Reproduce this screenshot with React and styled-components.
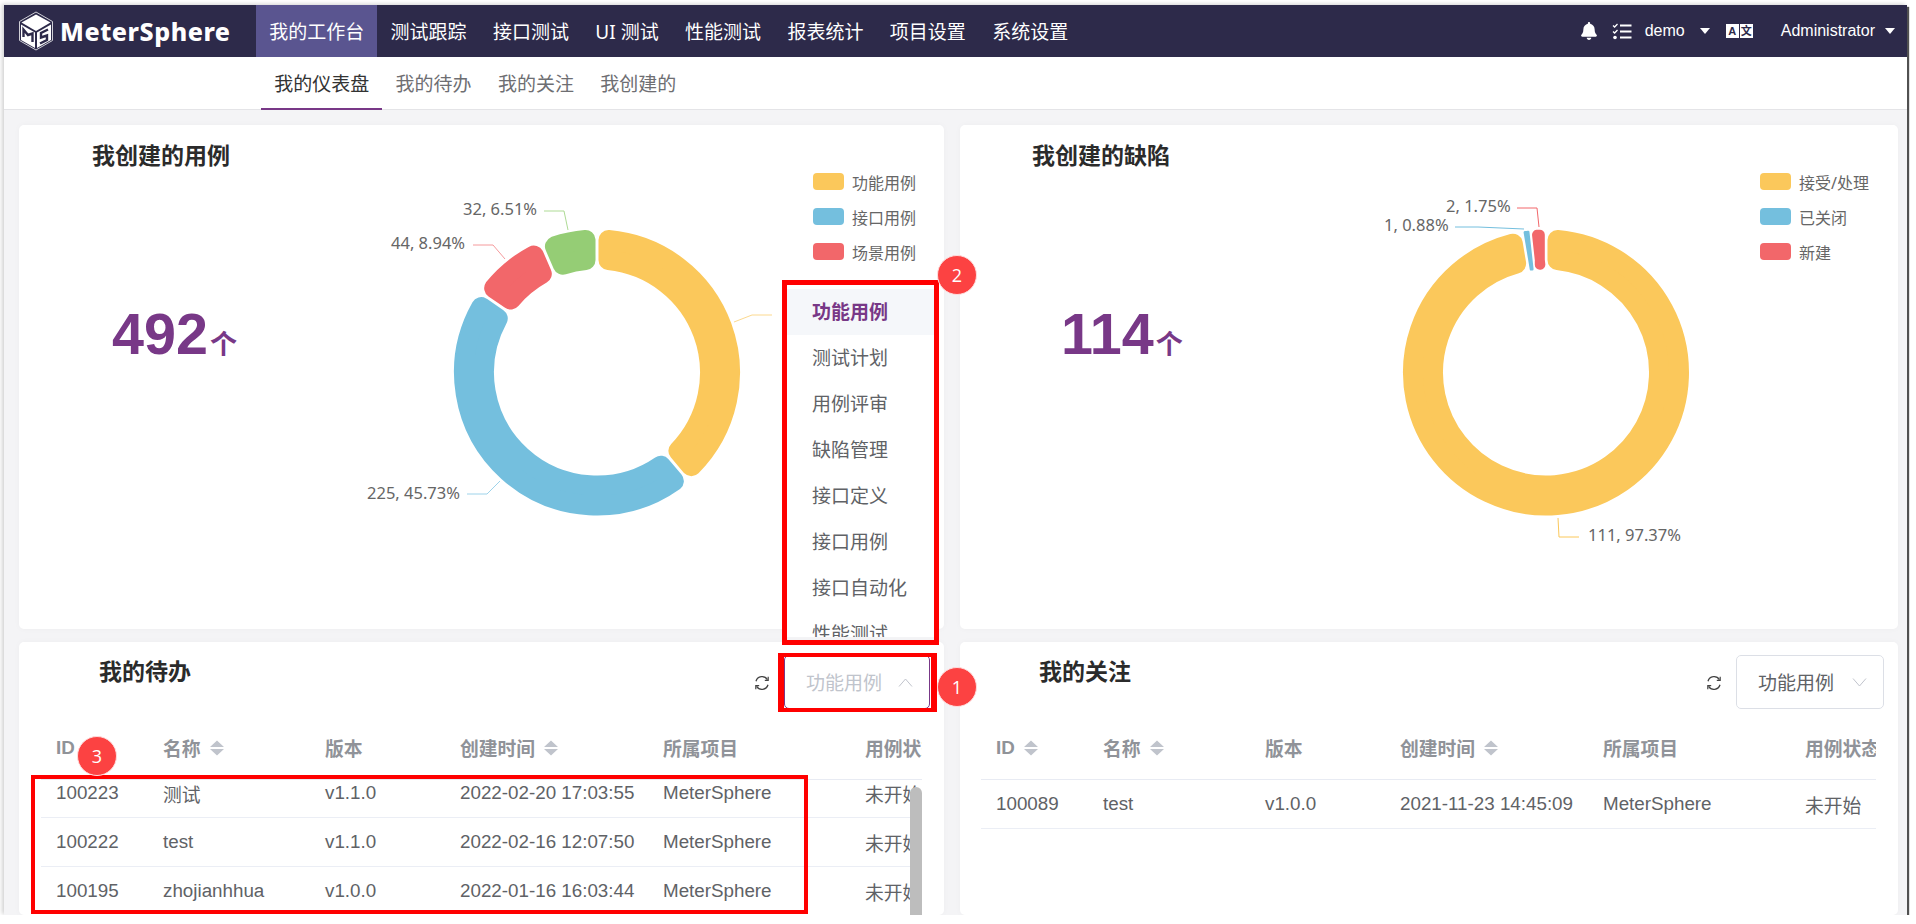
import React from "react";
import styled, { createGlobalStyle } from "styled-components";
import { FaBell } from "react-icons/fa";

const SANS = `"Liberation Sans", "Noto Sans CJK SC", sans-serif`;
const YAHEI = `"Noto Sans", "Noto Sans CJK SC", sans-serif`;

const Global = createGlobalStyle`
  html, body { margin: 0; padding: 0; background: #fff; overflow: hidden; }
  * { box-sizing: border-box; }
  body { font-family: ${SANS}; }
`;

const Frame = styled.div`
  position: relative;
  margin: 5px 0 0 4px;
  width: 1903px;
  height: 910px;
  background: #f4f4f6;
  box-shadow: 2px 2px 1px rgba(50, 50, 50, 0.85), -2px -1px 4px rgba(0, 0, 0, 0.18);
  display: flex;
  flex-direction: column;
`;

const Header = styled.header`
  height: 52px;
  background: #2d2a4a;
  display: flex;
  align-items: stretch;
  color: #fff;
  flex: none;
`;
const Logo = styled.div`
  width: 252px;
  display: flex;
  align-items: center;
  padding-left: 14px;
  gap: 6px;
`;
const LogoText = styled.span`
  font-family: "Noto Sans", sans-serif;
  font-weight: 800;
  font-size: 25px;
  letter-spacing: 0.55px;
  color: #fff;
  line-height: 1;
`;
const MenuItem = styled.div`
  padding: 0 13.2px;
  display: flex;
  align-items: center;
  font-size: 19px;
  font-family: ${YAHEI};
  color: #fff;
  white-space: nowrap;
  background: ${(p) => (p.$active ? "#5a5590" : "transparent")};
`;
const HeaderRight = styled.div`
  margin-left: auto;
  display: flex;
  align-items: center;
  padding-right: 12px;
  font-size: 16px;
`;
const HeaderText = styled.span`
  white-space: nowrap;
  margin: ${(p) => p.$m || 0};
`;
const Caret = styled.span`
  width: 0;
  height: 0;
  border-left: 5px solid transparent;
  border-right: 5px solid transparent;
  border-top: 6px solid #fff;
  margin: ${(p) => p.$m || 0};
`;
const LangIcon = styled.div`
  display: flex;
  gap: 1px;
  margin-left: 16px;
`;
const LangKey = styled.span`
  width: 13px;
  height: 14px;
  background: #fff;
  color: #2d2a4a;
  font-size: 11px;
  font-weight: 700;
  line-height: 14px;
  text-align: center;
  font-family: ${SANS};
`;

const SubNav = styled.nav`
  height: 53px;
  flex: none;
  background: #fff;
  border-bottom: 1px solid #e4e4e7;
  padding-left: 257px;
  display: flex;
`;
const Tab = styled.div`
  padding: 0 13.2px;
  height: 53px;
  display: flex;
  align-items: center;
  font-size: 19px;
  font-family: ${YAHEI};
  color: ${(p) => (p.$active ? "#333" : "#6e6e72")};
  border-bottom: 2px solid ${(p) => (p.$active ? "#783887" : "transparent")};
`;

const Main = styled.main`
  flex: 1;
  min-height: 0;
  padding: 15px 9px 0 15px;
  display: grid;
  grid-template-columns: 925px 938px;
  grid-template-rows: 504px 1fr;
  column-gap: 16px;
  row-gap: 13px;
`;
const Card = styled.section`
  background: #fff;
  border-radius: 5px;
  overflow: hidden;
  min-height: 0;
  box-shadow: 0 0 6px rgba(0, 0, 0, 0.03);
`;
const ChartCard = styled(Card)`
  display: flex;
  overflow: visible;
`;
const Summary = styled.div`
  flex: none;
  width: ${(p) => p.$w}px;
  padding-top: 15px;
  padding-left: ${(p) => p.$pad}px;
`;
const Title = styled.h2`
  margin: 0;
  font-size: 23px;
  line-height: 30px;
  font-weight: 700;
  font-family: ${YAHEI};
  color: #2b2b2b;
  white-space: nowrap;
`;
const Big = styled.div`
  margin: 131px 0 0 ${(p) => p.$shift}px;
  display: flex;
  align-items: baseline;
  color: #783887;
  font-weight: 700;
  white-space: nowrap;
`;
const BigNum = styled.span`
  font-size: 57.5px;
  line-height: 66px;
  font-family: ${SANS};
`;
const BigUnit = styled.span`
  font-size: 27px;
  font-family: ${YAHEI};
  margin-left: 2px;
`;
const ChartSvg = styled.svg`
  flex: none;
  width: ${(p) => p.$w}px;
  height: 400px;
  margin-top: 45px;
  overflow: visible;
`;
const ChartLabel = styled.text`
  font-family: ${YAHEI};
  font-size: 16.5px;
  fill: #666;
`;
const Legend = styled.ul`
  list-style: none;
  margin: 0 0 0 ${(p) => p.$gap || 0}px;
  padding: 48px 0 0 0;
  display: flex;
  flex-direction: column;
  gap: 18px;
`;
const LegendRow = styled.li`
  display: flex;
  align-items: center;
  gap: 8px;
  height: 17px;
  font-family: ${YAHEI};
  font-size: 16px;
  color: #666;
  white-space: nowrap;
`;
const Swatch = styled.span`
  width: 31px;
  height: 17px;
  border-radius: 4px;
  background: ${(p) => p.$c};
`;

const ListCard = styled(Card)`
  display: flex;
  flex-direction: column;
  position: relative;
`;
const ListHead = styled.div`
  height: 74px;
  flex: none;
  padding: 13px 14px 0 ${(p) => p.$pad}px;
  display: flex;
  align-items: flex-start;
`;
const ListTitle = styled(Title)`
  margin-top: 1px;
`;
const Refresh = styled.svg`
  margin: 20px 14px 0 auto;
  width: 16px;
  height: 16px;
  flex: none;
`;
const Select = styled.div`
  width: ${(p) => (p.$open ? 146 : 148)}px;
  height: 54px;
  border: 1px solid ${(p) => (p.$open ? "#783887" : "#dcdfe6")};
  border-radius: 5px;
  display: flex;
  align-items: center;
  padding: 0 16px 0 21px;
  justify-content: space-between;
  font-size: 19px;
  font-family: ${YAHEI};
  color: ${(p) => (p.$open ? "#c0c4cc" : "#606266")};
  flex: none;
`;
const TableWrap = styled.div`
  margin: 0 ${(p) => p.$right}px 0 ${(p) => p.$left}px;
  flex: 1;
  min-height: 0;
  display: flex;
  flex-direction: column;
  position: relative;
  overflow: hidden;
`;
const Row = styled.div`
  display: grid;
  grid-template-columns: 107px 162px 135px 203px 202px 1fr;
  flex: none;
  height: ${(p) => (p.$head ? 64 : 49)}px;
  border-bottom: 1px solid ${(p) => (p.$head ? "#e8ebf3" : "#ebeef5")};
  align-items: center;
  background: #fff;
`;
const Cell = styled.div`
  padding-left: 15px;
  font-size: 18.8px;
  color: #606266;
  font-family: ${SANS}, ${YAHEI};
  white-space: nowrap;
  overflow: hidden;
`;
const HeadCell = styled(Cell)`
  font-weight: 700;
  color: #909399;
  display: flex;
  align-items: center;
  gap: 9px;
`;
const Body = styled.div`
  flex: 1;
  min-height: 0;
  overflow: hidden;
`;
const BodyInner = styled.div`
  margin-top: ${(p) => p.$offset || 0}px;
`;
const Thumb = styled.div`
  position: absolute;
  right: 0;
  top: 71px;
  bottom: 0;
  width: 12px;
  background: #bdbdbd;
  border-radius: 6px 6px 0 0;
`;
const SortIcon = styled.svg`
  width: 14px;
  height: 16px;
  flex: none;
`;

const Dropdown = styled.div`
  position: absolute;
  left: 783px;
  top: 279px;
  width: 148px;
  height: 353px;
  background: #fff;
  overflow: hidden;
  padding-top: 5px;
  z-index: 3;
`;
const DropItem = styled.div`
  height: 46px;
  line-height: 46px;
  padding-left: 25px;
  font-size: 19px;
  font-family: ${YAHEI};
  color: ${(p) => (p.$active ? "#783887" : "#606266")};
  font-weight: ${(p) => (p.$active ? 700 : 400)};
  background: ${(p) => (p.$active ? "#f5f7fa" : "#fff")};
`;
const RedBox = styled.div`
  position: absolute;
  left: ${(p) => p.$x}px;
  top: ${(p) => p.$y}px;
  width: ${(p) => p.$w}px;
  height: ${(p) => p.$h}px;
  border-style: solid;
  border-color: #f00;
  border-width: ${(p) => p.$b || "5px"};
  z-index: 4;
  pointer-events: none;
`;
const Badge = styled.div`
  position: absolute;
  left: ${(p) => p.$x - 20}px;
  top: ${(p) => p.$y - 20}px;
  width: 40px;
  height: 40px;
  border-radius: 50%;
  background: #fc4242;
  border: 1px solid #fdd;
  color: #fff;
  font-size: 18px;
  font-family: "Open Sans", sans-serif;
  display: flex;
  align-items: center;
  justify-content: center;
  z-index: 5;
`;

/* ---------- drawings ---------- */

const pt = (cx, cy, r, deg) => {
  const a = ((deg - 90) * Math.PI) / 180;
  return `${(cx + r * Math.cos(a)).toFixed(2)} ${(cy + r * Math.sin(a)).toFixed(2)}`;
};
function sectorPath(cx, cy, ro, ri, a0, a1, c, gap) {
  const r1 = ro - c;
  const r2 = ri + c;
  const d1 = (((c + gap) / r1) * 180) / Math.PI;
  const d2 = (((c + gap) / r2) * 180) / Math.PI;
  const large1 = a1 - a0 - 2 * d1 > 180 ? 1 : 0;
  const large2 = a1 - a0 - 2 * d2 > 180 ? 1 : 0;
  return `M${pt(cx, cy, r1, a0 + d1)}A${r1} ${r1} 0 ${large1} 1 ${pt(cx, cy, r1, a1 - d1)}L${pt(cx, cy, r2, a1 - d2)}A${r2} ${r2} 0 ${large2} 0 ${pt(cx, cy, r2, a0 + d2)}Z`;
}
const Sector = ({ cx, cy, ro, ri, a0, a1, c, gap, color }) => (
  <path d={sectorPath(cx, cy, ro, ri, a0, a1, c, gap)} fill={color} stroke={color} strokeWidth={c * 2} strokeLinejoin="round" />
);
const YELLOW = "#fbc85b";
const BLUE = "#74bfde";
const RED = "#f2676a";
const GREEN = "#95cd75";

const LeftChart = () => (
  <ChartSvg $w={540} viewBox="259 170 540 400">
    <Sector cx={597} cy={372.5} ro={143} ri={103} a0={0} a1={139.75} c={10} gap={1.5} color={YELLOW} />
    <Sector cx={597} cy={372.5} ro={143} ri={103} a0={139.75} a1={304.4} c={10} gap={1.5} color={BLUE} />
    <Sector cx={597} cy={372.5} ro={143} ri={103} a0={304.4} a1={336.6} c={10} gap={1.5} color={RED} />
    <Sector cx={597} cy={372.5} ro={143} ri={103} a0={336.6} a1={360} c={10} gap={1.5} color={GREEN} />
    <g fill="none" strokeWidth="1">
      <polyline points="544,211 564,211 568,230" stroke="#aedb95" />
      <polyline points="473,245 493,245 505,259" stroke="#f59a9c" />
      <polyline points="467,494 487,494 500,481" stroke="#9ed3ea" />
      <polyline points="734,322 752,315 772,315" stroke="#fcd98f" />
    </g>
    <ChartLabel x="463" y="215">32, 6.51%</ChartLabel>
    <ChartLabel x="391" y="249">44, 8.94%</ChartLabel>
    <ChartLabel x="367" y="499">225, 45.73%</ChartLabel>
    <ChartLabel x="781" y="321">191, 38.82%</ChartLabel>
  </ChartSvg>
);
const RightChart = () => (
  <ChartSvg $w={550} viewBox="1210 170 550 400">
    <Sector cx={1546} cy={372.5} ro={143} ri={103} a0={0} a1={350.5} c={10} gap={1.5} color={YELLOW} />
    <Sector cx={1546} cy={372.5} ro={143} ri={103} a0={350.5} a1={353.7} c={1.4} gap={1} color={BLUE} />
    <Sector cx={1546} cy={372.5} ro={143} ri={103} a0={353.7} a1={360} c={5} gap={1.2} color={RED} />
    <g fill="none" strokeWidth="1">
      <polyline points="1517,208 1537,208 1539,227" stroke={RED} />
      <polyline points="1455,227 1478,227 1524,229" stroke={BLUE} />
      <polyline points="1558,518 1559,537 1579,537" stroke={YELLOW} />
    </g>
    <ChartLabel x="1446" y="212">2, 1.75%</ChartLabel>
    <ChartLabel x="1384" y="231">1, 0.88%</ChartLabel>
    <ChartLabel x="1588" y="541">111, 97.37%</ChartLabel>
  </ChartSvg>
);

const CubeLogo = () => (
  <svg width="36" height="40" viewBox="0 0 36 40">
    <path d="M18 1 L34.5 10.5 V29.5 L18 39 L1.5 29.5 V10.5 Z" fill="none" stroke="#cfcfd6" strokeWidth="1" />
    <path d="M18 3.5 L32.5 11.5 L18 20 L3.5 11.5 Z" fill="#fff" />
    <path d="M3 13.5 L17 21.5 V37 L3 29 Z" fill="#fff" />
    <path d="M33 13.5 L19 21.5 V37 L33 29 Z" fill="#fff" />
    <path d="M5.5 26 V18.5 L10 24 L14.5 22.5 V31" fill="none" stroke="#2d2a4a" strokeWidth="2.4" />
    <path d="M30 18.5 L23 22 V26.5 L29 24.5 V29 L22 32.5" fill="none" stroke="#2d2a4a" strokeWidth="2.4" />
  </svg>
);
const Checklist = () => (
  <svg width="20" height="17" viewBox="0 0 20 17" style={{ margin: "0 13px 0 14px" }}>
    <path d="M1 2.5 L2.6 4 L5.5 1 M1 8.5 L2.6 10 L5.5 7" fill="none" stroke="#fff" strokeWidth="1.3" />
    <circle cx="3" cy="14.5" r="1.8" fill="#fff" />
    <path d="M8 2.5 H19.5 M8 8.5 H19.5 M8 14.5 H19.5" stroke="#fff" strokeWidth="2" />
  </svg>
);
const RefreshIcon = () => (
  <Refresh viewBox="0 0 16 16">
    <path d="M2 6.2 A6.3 6.3 0 0 1 13.4 4.6 M14 9.8 A6.3 6.3 0 0 1 2.6 11.4" fill="none" stroke="#444" strokeWidth="1.3" />
    <path d="M14.2 1.8 V5.4 H10.8 M1.8 14.2 V10.6 H5.2" fill="none" stroke="#444" strokeWidth="1.2" />
  </Refresh>
);
const Sort = () => (
  <SortIcon viewBox="0 0 14 16">
    <path d="M7 0.5 L14 7 H0 Z M0 9 H14 L7 15.5 Z" fill="#c0c4cc" />
  </SortIcon>
);
const Chevron = ({ up, color }) => (
  <svg width="15" height="9" viewBox="0 0 15 9">
    <path d={up ? "M1 8.5 L7.5 1 L14 8.5" : "M1 0.5 L7.5 8 L14 0.5"} fill="none" stroke={color} strokeWidth="1" />
  </svg>
);

/* ---------- data ---------- */

const menu = ["我的工作台", "测试跟踪", "接口测试", "UI 测试", "性能测试", "报表统计", "项目设置", "系统设置"];
const tabs = ["我的仪表盘", "我的待办", "我的关注", "我创建的"];
const dropdown = ["功能用例", "测试计划", "用例评审", "缺陷管理", "接口定义", "接口用例", "接口自动化", "性能测试"];
const todoRows = [
  ["100223", "测试", "v1.1.0", "2022-02-20 17:03:55", "MeterSphere", "未开始"],
  ["100222", "test", "v1.1.0", "2022-02-16 12:07:50", "MeterSphere", "未开始"],
  ["100195", "zhojianhhua", "v1.0.0", "2022-01-16 16:03:44", "MeterSphere", "未开始"],
];
const watchRows = [["100089", "test", "v1.0.0", "2021-11-23 14:45:09", "MeterSphere", "未开始"]];

const DataTable = ({ rows, left, right, offset, scrollbar }) => (
  <TableWrap $left={left} $right={right}>
    <Row $head>
      <HeadCell>ID <Sort /></HeadCell>
      <HeadCell>名称 <Sort /></HeadCell>
      <HeadCell>版本</HeadCell>
      <HeadCell>创建时间 <Sort /></HeadCell>
      <HeadCell>所属项目</HeadCell>
      <HeadCell>用例状态</HeadCell>
    </Row>
    <Body>
      <BodyInner $offset={offset}>
        {rows.map((r) => (
          <Row key={r[0]}>
            {r.map((c, i) => (
              <Cell key={i}>{c}</Cell>
            ))}
          </Row>
        ))}
      </BodyInner>
    </Body>
    {scrollbar && <Thumb />}
  </TableWrap>
);

const LegendList = ({ items, gap }) => (
  <Legend $gap={gap}>
    {items.map(([label, color]) => (
      <LegendRow key={label}>
        <Swatch $c={color} />
        {label}
      </LegendRow>
    ))}
  </Legend>
);

export default function App() {
  return (
    <>
      <Global />
      <Frame>
        <Header>
          <Logo>
            <CubeLogo />
            <LogoText>MeterSphere</LogoText>
          </Logo>
          {menu.map((m, i) => (
            <MenuItem key={m} $active={i === 0}>{m}</MenuItem>
          ))}
          <HeaderRight>
            <FaBell size={18} color="#fff" />
            <Checklist />
            <HeaderText>demo</HeaderText>
            <Caret $m="0 0 0 15px" />
            <LangIcon>
              <LangKey>A</LangKey>
              <LangKey>文</LangKey>
            </LangIcon>
            <HeaderText $m="0 0 0 28px">Administrator</HeaderText>
            <Caret $m="0 0 0 10px" />
          </HeaderRight>
        </Header>
        <SubNav>
          {tabs.map((t, i) => (
            <Tab key={t} $active={i === 0}>{t}</Tab>
          ))}
        </SubNav>
        <Main>
          <ChartCard>
            <Summary $w={240} $pad={73}>
              <Title>我创建的用例</Title>
              <Big $shift={20}>
                <BigNum>492</BigNum>
                <BigUnit>个</BigUnit>
              </Big>
            </Summary>
            <LeftChart />
            <LegendList gap={14} items={[["功能用例", YELLOW], ["接口用例", BLUE], ["场景用例", RED]]} />
          </ChartCard>
          <ChartCard>
            <Summary $w={250} $pad={72}>
              <Title>我创建的缺陷</Title>
              <Big $shift={29}>
                <BigNum>114</BigNum>
                <BigUnit>个</BigUnit>
              </Big>
            </Summary>
            <RightChart />
            <LegendList items={[["接受/处理", YELLOW], ["已关闭", BLUE], ["新建", RED]]} />
          </ChartCard>
          <ListCard>
            <ListHead $pad={80}>
              <ListTitle>我的待办</ListTitle>
              <RefreshIcon />
              <Select $open>
                功能用例
                <Chevron up color="#c0c4cc" />
              </Select>
            </ListHead>
            <DataTable rows={todoRows} left={22} right={22} offset={-11} scrollbar />
          </ListCard>
          <ListCard>
            <ListHead $pad={79}>
              <ListTitle>我的关注</ListTitle>
              <RefreshIcon />
              <Select>
                功能用例
                <Chevron color="#c0c4cc" />
              </Select>
            </ListHead>
            <DataTable rows={watchRows} left={21} right={22} />
          </ListCard>
        </Main>
        <Dropdown>
          {dropdown.map((d, i) => (
            <DropItem key={d} $active={i === 0}>{d}</DropItem>
          ))}
        </Dropdown>
        <RedBox $x={778} $y={275} $w={157} $h={365} />
        <RedBox $x={774} $y={648} $w={159} $h={59} $b="4px 6px" />
        <RedBox $x={27} $y={770} $w={777} $h={139} $b="4px" />
        <Badge $x={953} $y={682}>1</Badge>
        <Badge $x={953} $y={270}>2</Badge>
        <Badge $x={93} $y={751}>3</Badge>
      </Frame>
    </>
  );
}
